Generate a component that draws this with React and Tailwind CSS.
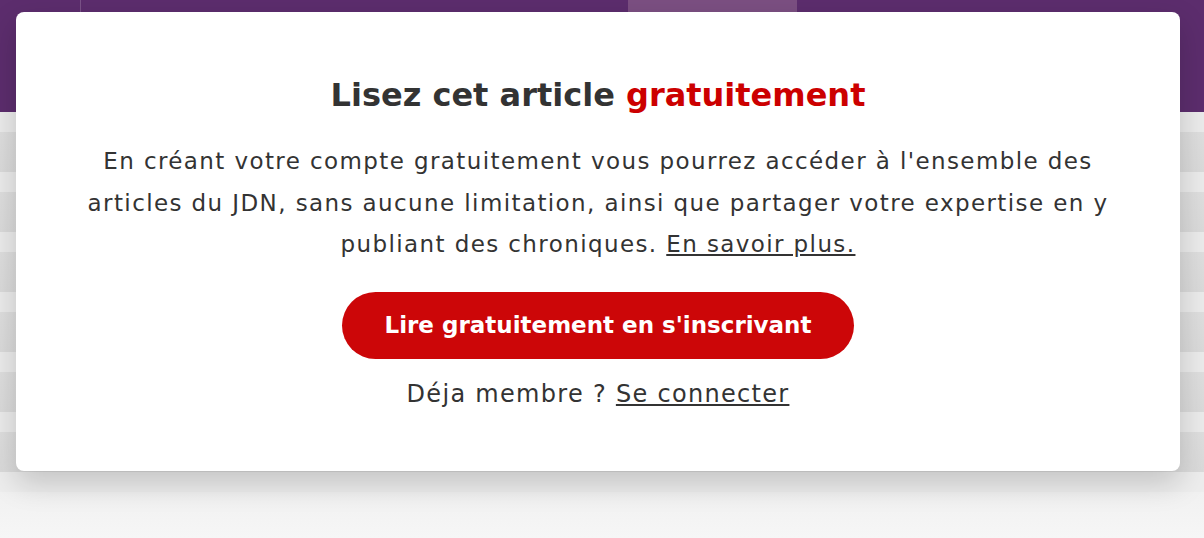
import React from 'react';

const font = { fontFamily: '"DejaVu Sans", "Liberation Sans", sans-serif' };

function Backdrop() {
  const rows = Array.from({ length: 6 });
  return (
    <div className="flex flex-col">
      <div className="relative h-[112px] bg-[#5c2d6d]">
        <div className="absolute left-[80px] top-0 h-[12px] w-px bg-[#7a5288]" />
        <div className="absolute left-[628px] top-0 h-[12px] w-[169px] bg-[#7b4f82]" />
      </div>
      {rows.map((_, i) => (
        <div key={i} className="flex flex-col">
          <div className="h-[20px] bg-[#ebebeb]" />
          <div className="h-[40px] bg-gradient-to-b from-[#dedede] to-[#dadada]" />
        </div>
      ))}
      <div className="h-[20px] bg-[#ededed]" />
      <div className="h-[46px] bg-gradient-to-b from-[#f1f1f1] to-[#f6f6f6]" />
    </div>
  );
}

export default function App() {
  return (
    <div className="relative h-[538px] w-[1204px] overflow-hidden" style={font}>
      <Backdrop />
      <div className="absolute left-[16px] top-[12px] flex h-[459px] w-[1164px] flex-col items-center rounded-lg bg-white pt-[64px] text-[#333333] shadow-[0_12px_30px_rgba(0,0,0,0.18)]">
        <h2 className="text-[32px] font-bold leading-[38px]">
          Lisez cet article <span className="text-[#cc0000]">gratuitement</span>
        </h2>
        <p className="mt-[27px] whitespace-nowrap text-center text-[23px] leading-[41.5px] tracking-[1.4px]">
          En créant votre compte gratuitement vous pourrez accéder à l'ensemble des
          <br />
          articles du JDN, sans aucune limitation, ainsi que partager votre expertise en y
          <br />
          publiant des chroniques. <a className="underline underline-offset-2">En savoir plus.</a>
        </p>
        <button className="mt-[26px] flex h-[67px] w-[512px] items-center justify-center rounded-full bg-[#cc0608] text-[23px] font-bold text-white">
          Lire gratuitement en s'inscrivant
        </button>
        <p className="mt-[20px] text-[24px] leading-[30px] tracking-[1.3px]">
          Déja membre ? <a className="underline underline-offset-2">Se connecter</a>
        </p>
      </div>
    </div>
  );
}
